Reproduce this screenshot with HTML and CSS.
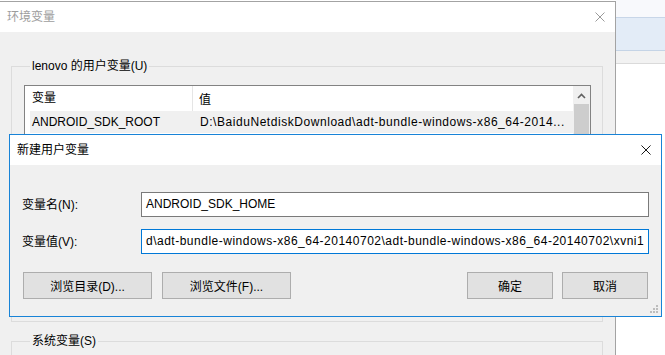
FILE: index.html
```html
<!DOCTYPE html>
<html lang="zh-CN">
<head>
<meta charset="utf-8">
<title>环境变量</title>
<link rel="stylesheet" href="styles.css">
</head>
<body>
<div class="desk">
  <div class="backwin">
    <div class="bw-top"></div>
    <div class="bw-band"></div>
    <div class="bw-strip"></div>
  </div>

  <div class="dlg env">
    <div class="titlebar">
      <span class="title">环境变量</span>
      <svg class="close" viewBox="0 0 10 10"><path d="M0.5 0.5L9.5 9.5M9.5 0.5L0.5 9.5" stroke="#9a9a9a" stroke-width="1" fill="none"/></svg>
    </div>
    <div class="body">
      <fieldset class="group user">
        <legend>lenovo 的用户变量(U)</legend>
        <div class="list">
          <div class="list-main">
            <div class="lrow head"><span class="c1">变量</span><span class="c2">值</span></div>
            <div class="lrow sel"><span class="c1">ANDROID_SDK_ROOT</span><span class="c2">D:\BaiduNetdiskDownload\adt-bundle-windows-x86_64-2014...</span></div>
          </div>
          <div class="vscroll">
            <div class="arrow"><svg viewBox="0 0 9 6" width="9" height="6"><path d="M1 5L4.5 1.5L8 5" stroke="#606060" stroke-width="1.6" fill="none"/></svg></div>
            <div class="thumb"></div>
          </div>
        </div>
      </fieldset>
      <fieldset class="group sys">
        <legend>系统变量(S)</legend>
        <div class="sys-inner"></div>
      </fieldset>
    </div>
  </div>

  <div class="dlg newvar">
    <div class="titlebar">
      <span class="title">新建用户变量</span>
      <svg class="close" viewBox="0 0 11 11"><path d="M0.5 0.5L10.5 10.5M10.5 0.5L0.5 10.5" stroke="#000" stroke-width="1" fill="none"/></svg>
    </div>
    <div class="body form">
      <div class="fields">
        <label class="lbl">变量名(N):</label>
        <div class="field">ANDROID_SDK_HOME</div>
        <label class="lbl">变量值(V):</label>
        <div class="field focus">d\adt-bundle-windows-x86_64-20140702\adt-bundle-windows-x86_64-20140702\xvni1</div>
      </div>
      <div class="buttons">
        <button class="btn wide">浏览目录(D)...</button>
        <button class="btn wide">浏览文件(F)...</button>
        <span class="spacer"></span>
        <button class="btn">确定</button>
        <button class="btn">取消</button>
      </div>
      <svg class="grip" viewBox="0 0 9 9" width="9" height="9">
        <rect x="6" y="0" width="2" height="2" fill="#bdbdbd"/>
        <rect x="3" y="3" width="2" height="2" fill="#bdbdbd"/>
        <rect x="6" y="3" width="2" height="2" fill="#bdbdbd"/>
        <rect x="0" y="6" width="2" height="2" fill="#bdbdbd"/>
        <rect x="3" y="6" width="2" height="2" fill="#bdbdbd"/>
        <rect x="6" y="6" width="2" height="2" fill="#bdbdbd"/>
      </svg>
    </div>
  </div>
</div>
</body>
</html>
```

FILE: styles.css
```css
* { box-sizing: border-box; }
html, body { margin: 0; padding: 0; }
body {
  width: 665px;
  height: 355px;
  overflow: hidden;
  background: #fff;
  font-family: "Liberation Sans", "Noto Sans CJK SC", sans-serif;
  font-size: 12px;
  color: #000;
}
.desk { position: relative; width: 665px; height: 355px; overflow: hidden; }

/* window behind, at the right */
.backwin {
  position: absolute; left: 616px; top: 0; width: 49px; height: 355px;
  background: #fff; display: flex; flex-direction: column;
}
.bw-top { height: 18px; background: #f8f9fc; border-bottom: 1px solid #c8d6e8; }
.bw-band { height: 33px; background: #e3ecf7; border-bottom: 1px solid #c5d4e6; }
.bw-strip { height: 13px; background: #f2f2f2; border-bottom: 1px solid #dadada; }

/* dialogs */
.dlg { position: absolute; display: flex; flex-direction: column; }
.titlebar {
  flex: none; height: 30px; background: #fff;
  display: flex; align-items: center; justify-content: space-between;
  padding: 0 10px 0 7px; line-height: 16px;
}
.close { width: 10px; height: 10px; display: block; }
.body { flex: 1; background: #f0f0f0; position: relative; }

.env {
  left: -1px; top: 1px; width: 617px; height: 380px;
  border: 1px solid #a3a3a3; background: #f0f0f0;
}
.env .title { color: #9d9d9d; }
.env .body { padding: 27px 12px 0 11px; }

.group {
  margin: 0; padding: 12px 11px 0 12px;
  border: 1px solid #dcdcdc;
  min-width: 0;
}
.group legend {
  margin-left: 6px; padding: 0 2px; line-height: 14px; height: 14px;
}
.user { height: 263px; }
.sys { margin-top: 12px; height: 60px; }

.list {
  height: 200px; border: 1px solid #828282; background: #fff;
  display: flex;
}
.list-main { flex: 1; min-width: 0; }
.lrow { display: flex; align-items: center; white-space: nowrap; }
.lrow.head { height: 25px; }
.lrow.head .c1 { width: 168px; padding-left: 7px; border-right: 1px solid #e5e5e5; height: 25px; line-height: 25px; }
.lrow.head .c2 { padding-left: 6px; }
.lrow.sel { height: 22px; margin-left: 5px; background: #f0f0f0; }
.lrow.sel .c1 { width: 163px; padding-left: 2px; }
.lrow.sel .c2 { padding-left: 7px; overflow: hidden; letter-spacing: 0.55px; }

.vscroll { width: 17px; flex: none; background: #f0f0f0; display: flex; flex-direction: column; align-items: center; }
.arrow { height: 17px; width: 17px; display: flex; align-items: center; justify-content: center; padding-top: 2px; }
.arrow svg { display: block; }
.thumb { width: 15px; height: 160px; margin-top: 1px; background: #cdcdcd; }

.newvar {
  left: 9px; top: 134px; width: 653px; height: 183px;
  border: 1px solid #1883d7; background: #f0f0f0;
}
.form { padding: 27px 12px 0 12px; }
.fields {
  display: grid; grid-template-columns: 119px 1fr;
  grid-auto-rows: 25px; row-gap: 12px; align-items: center;
}
.lbl { line-height: 16px; }
.field {
  height: 25px; border: 1px solid #7a7a7a; background: #fff;
  padding: 0 4px; line-height: 23px; white-space: nowrap; overflow: hidden;
}
.field.focus { border-color: #0078d7; letter-spacing: 0.5px; }

.buttons { display: flex; margin-top: 18px; gap: 10px; padding: 0 1px; }
.btn {
  height: 27px; width: 86px; margin: 0;
  background: #e1e1e1; border: 1px solid #adadad; border-radius: 0;
  font: inherit; color: #000; padding: 0;
}
.btn.wide { width: 129px; }
.spacer { flex: 1; }
.buttons .btn:last-child { margin-left: -1px; }
.grip { position: absolute; right: 2px; bottom: 2px; display: block; }
```
